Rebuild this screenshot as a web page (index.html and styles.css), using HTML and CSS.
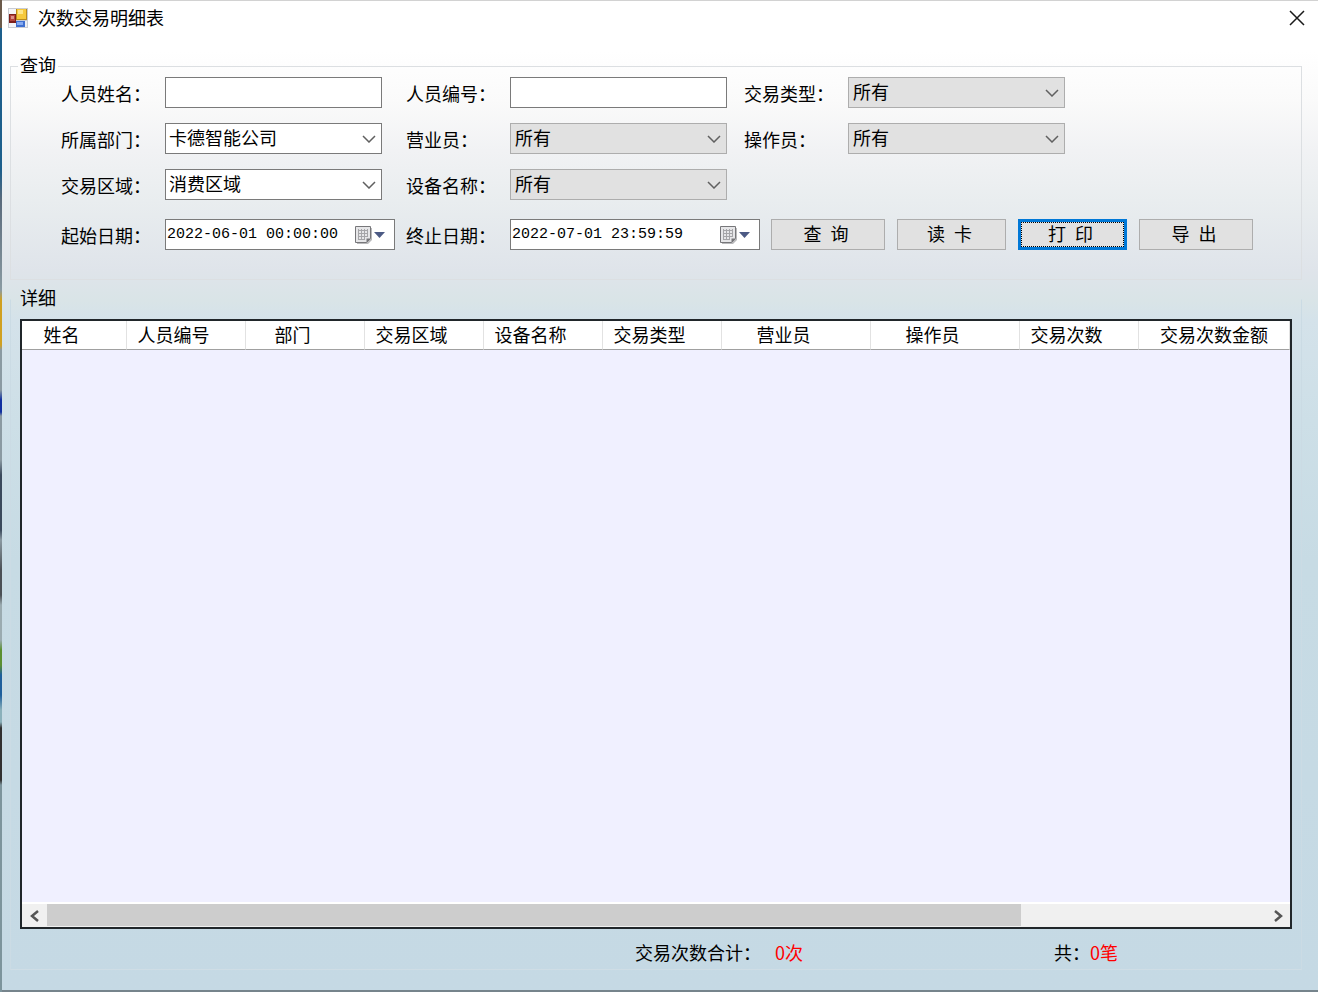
FILE: index.html
```html
<!DOCTYPE html>
<html lang="zh-CN">
<head>
<meta charset="utf-8">
<title>次数交易明细表</title>
<link rel="stylesheet" href="styles.css">
</head>
<body>
<div class="desktop-edge"></div>
<main class="window">
  <header class="titlebar">
    <svg class="app-icon" width="20" height="20" viewBox="0 0 20 20" aria-hidden="true">
      <rect x="0" y="0" width="20" height="20" fill="#c9ccd3"/>
      <rect x="1" y="1" width="7" height="5" fill="#f4f5f8"/>
      <rect x="1" y="15" width="7" height="4" fill="#f4f5f8"/>
      <rect x="8" y="1" width="11" height="11" fill="#b98a1c"/>
      <rect x="9" y="1" width="9" height="10" fill="#f6c93c"/>
      <rect x="10" y="2" width="5" height="4" fill="#fde68a"/>
      <rect x="1" y="6" width="7" height="9" fill="#7d1f1b"/>
      <rect x="2" y="7" width="5" height="6" fill="#b4443c"/>
      <rect x="3" y="8" width="3" height="3" fill="#dc9088"/>
      <rect x="8" y="13" width="9" height="6" fill="#3f6fd0"/>
      <rect x="9" y="14" width="6" height="3" fill="#86aaf0"/>
      <rect x="17" y="13" width="2" height="6" fill="#eceef2"/>
    </svg>
    <h1 class="title">次数交易明细表</h1>
    <button class="close" type="button" aria-label="关闭">
      <svg width="16" height="16" viewBox="0 0 16 16"><path d="M1 1L15 15M15 1L1 15" stroke="#1a1a1a" stroke-width="1.5" fill="none"/></svg>
    </button>
  </header>

  <form class="content">
    <fieldset class="group query">
      <legend>查询</legend>
      <div class="row">
        <label class="label" for="name">人员姓名：</label>
        <input class="control text first" id="name" type="text">
        <label class="label" for="code">人员编号：</label>
        <input class="control text second" id="code" type="text">
        <label class="label" for="kind">交易类型：</label>
        <span class="combo"><select class="control flat" id="kind"><option>所有</option></select><svg class="chevron" width="14" height="8" viewBox="0 0 14 8"><path d="M1 1L7 7L13 1"/></svg></span>
      </div>
      <div class="row">
        <label class="label" for="dept">所属部门：</label>
        <span class="combo first"><select class="control" id="dept"><option>卡德智能公司</option></select><svg class="chevron" width="14" height="8" viewBox="0 0 14 8"><path d="M1 1L7 7L13 1"/></svg></span>
        <label class="label" for="clerk">营业员：</label>
        <span class="combo second"><select class="control flat" id="clerk"><option>所有</option></select><svg class="chevron" width="14" height="8" viewBox="0 0 14 8"><path d="M1 1L7 7L13 1"/></svg></span>
        <label class="label" for="operator">操作员：</label>
        <span class="combo"><select class="control flat" id="operator"><option>所有</option></select><svg class="chevron" width="14" height="8" viewBox="0 0 14 8"><path d="M1 1L7 7L13 1"/></svg></span>
      </div>
      <div class="row">
        <label class="label" for="area">交易区域：</label>
        <span class="combo first"><select class="control" id="area"><option>消费区域</option></select><svg class="chevron" width="14" height="8" viewBox="0 0 14 8"><path d="M1 1L7 7L13 1"/></svg></span>
        <label class="label" for="device">设备名称：</label>
        <span class="combo second"><select class="control flat" id="device"><option>所有</option></select><svg class="chevron" width="14" height="8" viewBox="0 0 14 8"><path d="M1 1L7 7L13 1"/></svg></span>
      </div>
      <div class="row last">
        <label class="label" for="from">起始日期：</label>
        <span class="date start">
          <input class="date-input" id="from" type="text" value="2022-06-01 00:00:00">
          <button class="picker" type="button" aria-label="选择起始日期"><svg width="32" height="20" viewBox="0 0 32 20"><path d="M3 3H18V15L14 19H3Z" fill="#b9b9bb"/><path d="M1.500 1.500H16.500V13.500L12.500 17.500H1.500Z" fill="#e6e6e8" stroke="#77777a"/><path d="M4 5.500H14M4 8.500H14M4 11.500H14M4 14.500H11M4.500 4V15M7.500 4V15M10.500 4V15M13.500 4V12" stroke="#a5a5a8" fill="none"/><path d="M16.500 13.500H12.500V17.500Z" fill="#77777a"/><path d="M20 7H31L25.500 13Z" fill="#4c5a84"/></svg></button>
        </span>
        <label class="label" for="to">终止日期：</label>
        <span class="date end">
          <input class="date-input" id="to" type="text" value="2022-07-01 23:59:59">
          <button class="picker" type="button" aria-label="选择终止日期"><svg width="32" height="20" viewBox="0 0 32 20"><path d="M3 3H18V15L14 19H3Z" fill="#b9b9bb"/><path d="M1.500 1.500H16.500V13.500L12.500 17.500H1.500Z" fill="#e6e6e8" stroke="#77777a"/><path d="M4 5.500H14M4 8.500H14M4 11.500H14M4 14.500H11M4.500 4V15M7.500 4V15M10.500 4V15M13.500 4V12" stroke="#a5a5a8" fill="none"/><path d="M16.500 13.500H12.500V17.500Z" fill="#77777a"/><path d="M20 7H31L25.500 13Z" fill="#4c5a84"/></svg></button>
        </span>
        <div class="actions">
          <button class="btn wide" type="button">查&ensp;询</button>
          <button class="btn" type="button">读&ensp;卡</button>
          <button class="btn active" type="button"><span class="focus">打&ensp;印</span></button>
          <button class="btn wide" type="button">导&ensp;出</button>
        </div>
      </div>
    </fieldset>

    <fieldset class="group detail">
      <legend>详细</legend>
      <div class="list">
        <div class="list-body">
          <table class="grid">
            <colgroup>
              <col class="c-name"><col class="c-std"><col class="c-std"><col class="c-std"><col class="c-std"><col class="c-std"><col class="c-long"><col class="c-long"><col class="c-std"><col>
            </colgroup>
            <thead>
              <tr><th>姓名</th><th>人员编号</th><th>部门</th><th>交易区域</th><th>设备名称</th><th>交易类型</th><th>营业员</th><th>操作员</th><th>交易次数</th><th>交易次数金额</th></tr>
            </thead>
          </table>
        </div>
        <div class="scrollbar">
          <button class="arrow" type="button" aria-label="向左滚动"><svg width="10" height="12" viewBox="0 0 10 12"><path d="M8 1L2 6L8 11"/></svg></button>
          <div class="track"><div class="thumb"></div></div>
          <button class="arrow" type="button" aria-label="向右滚动"><svg width="10" height="12" viewBox="0 0 10 12"><path d="M2 1L8 6L2 11"/></svg></button>
        </div>
      </div>
      <footer class="totals">
        <p class="total times"><span>交易次数合计：</span><output class="value spaced">0次</output></p>
        <p class="total"><span>共：</span><output class="value">0笔</output></p>
      </footer>
    </fieldset>
  </form>
</main>
</body>
</html>
```

FILE: styles.css
```css
* {
  box-sizing: border-box;
}

html {
  height: 100%;
}

body {
  display: flex;
  min-height: 100%;
  margin: 0;
  color: #000;
  font: 18px/20px "Noto Sans CJK SC", sans-serif;
}

button,
input,
select {
  margin: 0;
  color: inherit;
  font: inherit;
}

.desktop-edge {
  flex: none;
  width: 2px;
  background: linear-gradient(#6b5a4a 0 28px, #1d5f8c 28px 170px, #5a6b7c 200px, #8a9aa2 290px, #d0a020 300px 345px, #8a9aa2 350px 390px, #1030a0 400px 412px, #8a9aa2 416px 460px, #3a4a5c 475px 530px, #8a9aa2 540px, #4a5055 570px 595px, #9aabb0 605px 640px, #5a9030 650px 665px, #1d5f9c 675px 695px, #8ab0ba 710px 722px, #303030 728px 780px, #7c949c 785px);
}

.window {
  display: flex;
  flex: 1;
  flex-direction: column;
  min-width: 0;
  border-top: 1px solid #d2d2d2;
  border-bottom: 2px solid #76848c;
  background: linear-gradient(#fff 0, #fff 50px, #fafafa 100px, #f1f2f4 150px, #e9edef 200px, #dfe4ea 270px, #d9e4e7 300px, #d4e2ea 320px, #cddfe7 420px, #c7dbe4 560px, #c5d9e4 100%);
}

.titlebar {
  display: flex;
  align-items: center;
  height: 34px;
  padding: 0 12px 0 6px;
}

.title {
  flex: 1;
  margin: 0 0 0 10px;
  padding-bottom: 3px;
  font-size: 18px;
  font-weight: 400;
}

.close {
  display: flex;
  padding: 1px;
  border: 0;
  background: none;
}

.content {
  display: flex;
  flex: 1;
  flex-direction: column;
  margin: 0;
  padding: 20px 16px 20px 8px;
}

.group {
  min-width: 0;
  margin: 0;
  padding: 0;
  border: 1px solid #dcdfe2;
}

.group legend {
  margin-left: 7px;
  padding: 0 2px 2px;
  line-height: 18px;
  padding-bottom: 4px;
}

.query {
  padding-bottom: 29px;
}

.row {
  display: flex;
  flex-wrap: wrap;
  align-items: center;
  margin-bottom: 15px;
  padding-left: 50px;
}

.row.last {
  margin: 19px 0 0;
}

.label {
  width: 104px;
}

.control {
  width: 217px;
  height: 31px;
  padding: 0 3px 3px;
  border: 1px solid #7a7a7a;
  border-radius: 0;
  background: #fff;
  appearance: none;
}

.control.flat {
  border-color: #adadad;
  background: #e1e1e1;
  padding-left: 4px;
}

.first {
  margin-right: 24px;
}

.second {
  margin-right: 17px;
}

.combo {
  position: relative;
  display: flex;
}

.chevron {
  position: absolute;
  right: 6px;
  top: 12px;
  fill: none;
  stroke: #606060;
  stroke-width: 1.5;
  pointer-events: none;
}

.date {
  display: flex;
  align-items: center;
  height: 31px;
  border: 1px solid #7a7a7a;
  background: #fff;
}

.start {
  width: 230px;
  margin-right: 11px;
}

.end {
  width: 250px;
  margin-right: 11px;
}

.date-input {
  flex: 1;
  min-width: 0;
  padding: 0 1px;
  border: 0;
  background: none;
  font: 15px/20px "Liberation Mono", monospace;
}

.picker {
  display: flex;
  padding: 0 8px 0 0;
  border: 0;
  background: none;
}

.actions {
  display: flex;
  gap: 12px;
}

.btn {
  width: 109px;
  height: 31px;
  padding: 0 4px 3px 0;
  border: 1px solid #adadad;
  background: #e1e1e1;
}

.btn.wide {
  width: 114px;
}

.btn.active {
  padding: 0;
  border: 3px solid #0078d7;
}

.focus {
  display: flex;
  align-items: center;
  justify-content: center;
  height: 100%;
  padding: 0 4px 3px 0;
  border: 1px dotted #000;
}

.detail {
  display: flex;
  flex: 1;
  flex-direction: column;
  margin-top: 8px;
  border-color: transparent #cbdbe4 #cfdde5;
}

.list {
  display: flex;
  flex: 1;
  flex-direction: column;
  margin: 9px 9px 0;
  border: 2px solid #20262a;
  background: #f0f0ff;
}

.list-body {
  flex: 1;
}

.grid {
  width: 100%;
  border-collapse: separate;
  border-spacing: 0;
  table-layout: fixed;
}

.grid th {
  height: 29px;
  padding: 0 25px 2px 0;
  border-right: 1px solid #e2e2e2;
  border-bottom: 1px solid #a0a0a0;
  background: #fff;
  font-weight: 400;
  text-align: center;
  white-space: nowrap;
}

.grid th:last-child {
  padding-right: 0;
}

.c-name {
  width: 105px;
}

.c-std {
  width: 119px;
}

.c-long {
  width: 149px;
}

.scrollbar {
  display: flex;
  height: 25px;
  border-top: 2px solid #fff;
  background: #f0f0f0;
}

.arrow {
  display: flex;
  align-items: center;
  justify-content: center;
  width: 25px;
  padding: 0;
  border: 0;
  background: none;
}

.arrow path {
  fill: none;
  stroke: #555;
  stroke-width: 2.5;
}

.track {
  flex: 1;
}

.thumb {
  width: 80%;
  height: 22px;
  background: #cdcdcd;
}

.totals {
  display: flex;
  padding: 13px 0 7px 624px;
}

.total {
  display: flex;
  margin: 0;
}

.times {
  width: 419px;
}

.value {
  color: #f00;
}

.spaced {
  margin-left: 14px;
}
```
